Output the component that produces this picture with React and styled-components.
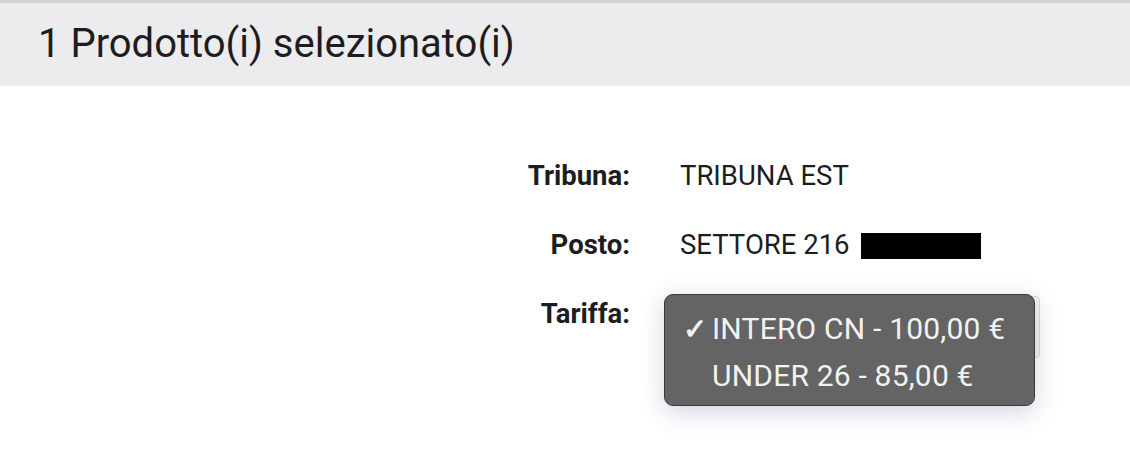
import React from "react";
import styled, { createGlobalStyle } from "styled-components";

const GlobalStyle = createGlobalStyle`
    body {
        margin: 0;
        background: #ffffff;
        font-family: Roboto, "Liberation Sans", sans-serif;
        color: #1d1d1f;
    }
`;

const Page = styled.div`
    width: 1130px;
    height: 454px;
    border-top: 3px solid #d3d3d5;
    box-sizing: border-box;
    overflow: hidden;
`;

const Header = styled.div`
    height: 83px;
    background: #ececee;
    display: flex;
    align-items: center;
    padding: 0 0 2px 38px;
    box-sizing: border-box;
`;

const Title = styled.h1`
    margin: 0;
    font-size: 40px;
    font-weight: 400;
    color: #1d1d1f;
`;

const Details = styled.div`
    display: grid;
    grid-template-columns: 630px 1fr;
    grid-auto-rows: 34px;
    column-gap: 50px;
    row-gap: 35px;
    padding: 73px 0 0 0;
`;

const Label = styled.div`
    text-align: right;
    font-size: 27.5px;
    font-weight: 700;
    line-height: 34px;
`;

const Value = styled.div`
    font-size: 27.5px;
    line-height: 34px;
    display: flex;
    align-items: center;
    gap: 11px;
`;

const Redacted = styled.span`
    display: inline-block;
    width: 120px;
    height: 26px;
    margin-top: 2px;
    background: #000;
`;

const SelectWrap = styled.div`
    position: relative;
    width: 360px;
    height: 34px;
`;

const SelectBox = styled.div`
    height: 62px;
    margin-top: -1px;
    border: 1px solid #d8d8d8;
    border-radius: 4px;
    background: #f4f4f4;
    box-sizing: border-box;
`;

const Menu = styled.ul`
    position: absolute;
    left: -16px;
    top: -3px;
    width: 371px;
    height: 112px;
    margin: 0;
    padding: 10px 0 0 0;
    list-style: none;
    background: #636463;
    border: 1px solid #3a3a3a;
    border-radius: 9px;
    box-shadow: 0 6px 24px rgba(40, 70, 110, 0.22);
    box-sizing: border-box;
`;

const Option = styled.li`
    display: flex;
    align-items: center;
    height: 47px;
    font-size: 30px;
    letter-spacing: 0.2px;
    color: #f2f2f2;
    padding: 0 0 0 18px;
`;

const Check = styled.span`
    width: 29px;
    font-size: 29px;
    font-weight: 700;
    visibility: ${(p) => (p.$on ? "visible" : "hidden")};
`;

const App = () => {
    const options = [
        { label: "INTERO CN - 100,00 €", on: true },
        { label: "UNDER 26 - 85,00 €", on: false },
    ];

    return (
        <>
            <GlobalStyle />
            <Page>
                <Header>
                    <Title>1 Prodotto(i) selezionato(i)</Title>
                </Header>
                <Details>
                    <Label>Tribuna:</Label>
                    <Value>TRIBUNA EST</Value>

                    <Label>Posto:</Label>
                    <Value>
                        SETTORE 216 <Redacted />
                    </Value>

                    <Label>Tariffa:</Label>
                    <SelectWrap>
                        <SelectBox />
                        <Menu>
                            {options.map((o) => (
                                <Option key={o.label}>
                                    <Check $on={o.on}>✓</Check>
                                    {o.label}
                                </Option>
                            ))}
                        </Menu>
                    </SelectWrap>
                </Details>
            </Page>
        </>
    );
};

export default App;
